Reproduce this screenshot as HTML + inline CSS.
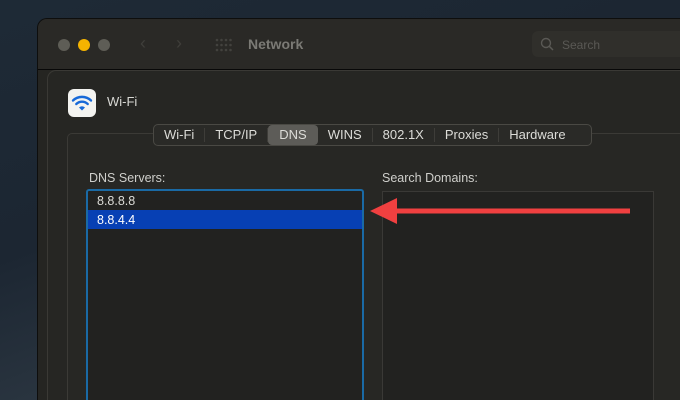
<!DOCTYPE html>
<html style="width:680px;height:400px;overflow:hidden"><head><style>
*{margin:0;padding:0;box-sizing:border-box}
body{width:680px;height:400px;overflow:hidden;position:relative;font-family:"Liberation Sans",sans-serif;background:linear-gradient(160deg,#1e2a36 0%,#1c2632 40%,#2a3540 65%,#414a50 100%)}
.win{position:absolute;left:37px;top:18px;width:643px;height:382px;background:#252522;border:1px solid #0e0e0d;border-right:none;border-bottom:none;border-radius:10px 0 0 0;overflow:hidden}
.tb{position:absolute;left:0;top:0;right:0;height:51px;background:#2a2926;border-bottom:1px solid #080808}
.dot{position:absolute;top:20px;width:12px;height:12px;border-radius:50%;background:#5e5d56}
.title{position:absolute;left:210px;top:17px;color:#7b7a75;font-weight:bold;font-size:14px}
.srch{position:absolute;top:12px;width:149px;height:26px;background:#302f2b;border-radius:6px 0 0 6px;left:494px;color:#5a5955;font-size:12px;padding:7px 0 0 30px}
.sheet{position:absolute;left:47px;top:70px;width:633px;height:330px;background:#262623;border:1px solid #3a3935;border-right:none;border-bottom:none;border-radius:9px 0 0 0;overflow:hidden}
.icon{position:absolute;left:20px;top:18px;width:28px;height:28px;background:#f3f3f0;border-radius:6px}
.wl{position:absolute;left:59px;top:23px;color:#d8d8d4;font-size:13px}
.group{position:absolute;left:19px;top:62px;width:614px;height:268px;background:#272724;border:1px solid #3b3a36;border-right:none;border-bottom:none;border-radius:5px 0 0 0}
.tabs{position:absolute;left:105px;top:53px;height:22px;width:439px;background:#2a2a27;border:1px solid #4a4944;border-radius:5px;display:flex;align-items:center;font-size:13px;color:#dcdcd8}
.tabs span{padding:0 10px;border-right:1px solid #3e3d39;line-height:14px}
.tabs span.sel{background:#5d5c58;border-radius:4px;line-height:20px;border:none;padding:0 11px}
.lbl{position:absolute;color:#cfcfcb;font-size:12.5px}
.list{position:absolute;left:86px;top:189px;width:278px;height:211px;background:#222220;border:2px solid #1a6aa5;border-bottom:none;border-radius:3px 3px 0 0}
.list div{height:19px;font-size:12.5px;color:#dcdcd8;padding:3px 0 0 9px}
.list .s{background:#0740b4;color:#fff}
.sd{position:absolute;left:382px;top:191px;width:272px;height:209px;background:#222220;border:1px solid #3a3936;border-bottom:none}
</style></head><body>
<div class="win">
<div class="tb">
<div class="dot" style="left:20px"></div>
<div class="dot" style="left:40px;background:#f5b300"></div>
<div class="dot" style="left:60px"></div>
<div style="position:absolute;left:102px;top:14px;color:#3f3e3a;font-size:18px">&#8249;</div>
<div style="position:absolute;left:138px;top:14px;color:#3f3e3a;font-size:18px">&#8250;</div>
<svg style="position:absolute;left:177px;top:19px" width="18" height="14"><g fill="#43423e"><circle cx="2" cy="2" r="1.3"/><circle cx="6.5" cy="2" r="1.3"/><circle cx="11" cy="2" r="1.3"/><circle cx="15.5" cy="2" r="1.3"/><circle cx="2" cy="7" r="1.3"/><circle cx="6.5" cy="7" r="1.3"/><circle cx="11" cy="7" r="1.3"/><circle cx="15.5" cy="7" r="1.3"/><circle cx="2" cy="12" r="1.3"/><circle cx="6.5" cy="12" r="1.3"/><circle cx="11" cy="12" r="1.3"/><circle cx="15.5" cy="12" r="1.3"/></g></svg>
<div class="title">Network</div>
<div class="srch">Search<svg style="position:absolute;left:8px;top:6px" width="14" height="14"><circle cx="6" cy="6" r="4.5" stroke="#5a5955" stroke-width="1.4" fill="none"/><path d="M9.3 9.3L13 13" stroke="#5a5955" stroke-width="1.5"/></svg></div>
</div>
</div>
<div class="sheet">
<div class="icon"><svg width="28" height="28" viewBox="0 0 28 28"><g fill="none" stroke="#1769d8" stroke-width="2.4" stroke-linecap="round"><path d="M5 11.5A13 13 0 0 1 23 11.5"/><path d="M8.3 15A8.3 8.3 0 0 1 19.7 15"/></g><path d="M11 18.5A4.2 4.2 0 0 1 17 18.5L14 21.5Z" fill="#1769d8"/></svg></div>
<div class="wl">Wi-Fi</div>
<div class="group"></div>
<div class="tabs"><span>Wi-Fi</span><span>TCP/IP</span><span class="sel">DNS</span><span>WINS</span><span>802.1X</span><span>Proxies</span><span style="border:none">Hardware</span></div>
</div>
<div class="lbl" style="left:89px;top:171px">DNS Servers:</div>
<div class="lbl" style="left:382px;top:171px">Search Domains:</div>
<div class="list"><div>8.8.8.8</div><div class="s">8.8.4.4</div></div>
<div class="sd"></div>
<svg style="position:absolute;left:0;top:0" width="680" height="400"><path d="M630 211H395" stroke="#f04040" stroke-width="5"/><path d="M370 211L397 198V224Z" fill="#f04040"/></svg>
</body></html>
